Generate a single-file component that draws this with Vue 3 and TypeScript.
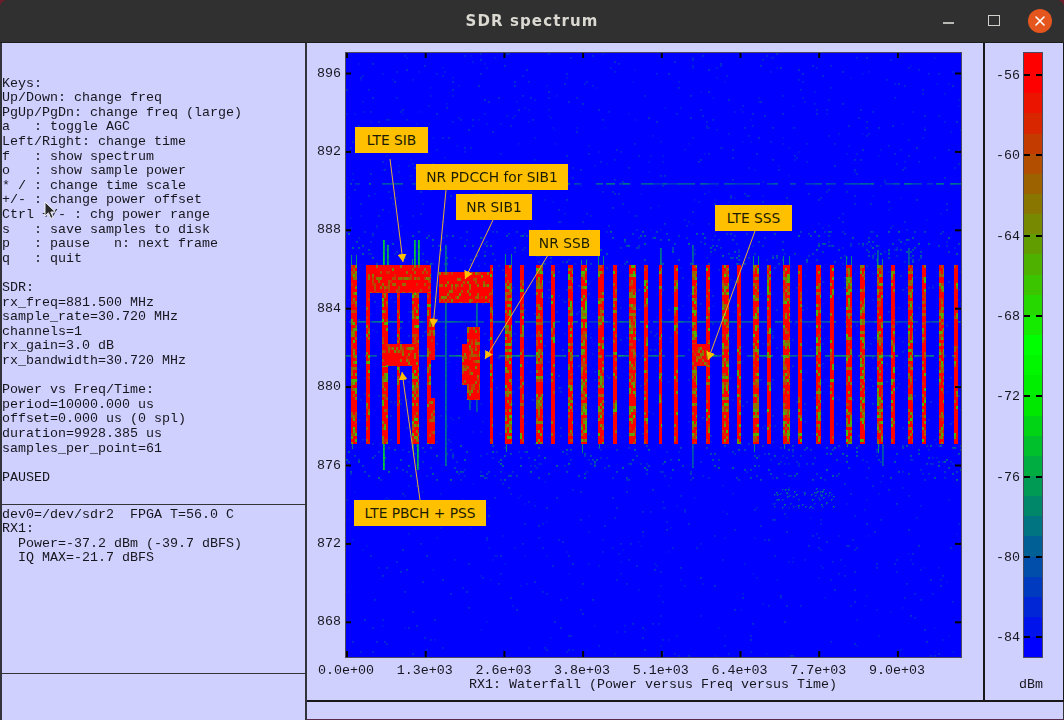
<script setup lang="ts">
import { onMounted, ref } from 'vue'

const W = 615
const H = 604
const X0 = 346
const Y0 = 53

const keysText = `

Keys:
Up/Down: change freq
PgUp/PgDn: change freq (large)
a   : toggle AGC
Left/Right: change time
f   : show spectrum
o   : show sample power
* / : change time scale
+/- : change power offset
Ctrl +/- : chg power range
s   : save samples to disk
p   : pause   n: next frame
q   : quit

SDR:
rx_freq=881.500 MHz
sample_rate=30.720 MHz
channels=1
rx_gain=3.0 dB
rx_bandwidth=30.720 MHz

Power vs Freq/Time:
period=10000.000 us
offset=0.000 us (0 spl)
duration=9928.385 us
samples_per_point=61

PAUSED`

const statusText = `dev0=/dev/sdr2  FPGA T=56.0 C
RX1:
  Power=-37.2 dBm (-39.7 dBFS)
  IQ MAX=-21.7 dBFS`

const freqTicks = [896, 892, 888, 884, 880, 876, 872, 868].map((f, i) => ({
  label: String(f),
  y: 20.5 + i * 78.4,
}))

const timeTicks = ['0.0e+00', '1.3e+03', '2.6e+03', '3.8e+03', '5.1e+03', '6.4e+03', '7.7e+03', '9.0e+03'].map(
  (label, i) => ({ label, x: i * 78.7 }),
)

const powerTicks = [-56, -60, -64, -68, -72, -76, -80, -84].map((p, i) => ({
  label: '-' + Math.abs(p),
  y: 22 + i * 80.3,
}))

const scaleSteps = Array.from({ length: 30 }, (_, i) => {
  if (i <= 1) return 'rgb(255,0,0)'
  if (i <= 14) {
    const t = (i - 1) / 13
    return `rgb(${Math.round(255 * (1 - t))},${Math.round(255 * t)},0)`
  }
  if (i <= 17) return `rgb(0,${255 - (i - 14) * 8},0)`
  const t = (i - 17) / 12
  return `rgb(0,${Math.round(231 * (1 - t))},${Math.round(255 * t)})`
})

const notes = [
  { text: 'LTE SIB', x: 9, y: 74, w: 73, from: [44, 106], to: [57, 209] },
  { text: 'NR PDCCH for SIB1', x: 70, y: 111, w: 152, from: [100, 137], to: [87, 274] },
  { text: 'NR SIB1', x: 110, y: 141, w: 76, from: [147, 167], to: [119, 226] },
  { text: 'NR SSB', x: 183, y: 177, w: 71, from: [202, 202], to: [139, 306] },
  { text: 'LTE SSS', x: 369, y: 152, w: 77, from: [409, 178], to: [362, 307] },
  { text: 'LTE PBCH + PSS', x: 8, y: 447, w: 132, from: [74, 447], to: [56, 319] },
]

const narrowBars: [number, number][] = [
  [351, 357], [366, 370], [382, 388], [397, 400], [412, 419], [427, 431], [490, 493], [505, 512],
  [520, 524], [536, 543], [551, 555], [568, 573], [581, 587], [598, 604], [613, 617], [629, 636],
  [644, 648], [659, 662], [674, 678], [692, 697], [706, 710], [722, 729], [737, 741], [753, 759],
  [767, 771], [783, 790], [798, 802], [816, 821], [830, 834], [846, 852], [860, 865], [877, 883],
  [891, 895], [908, 913], [922, 926], [939, 944], [954, 958],
]

const blocks: [number, number, number, number][] = [
  [366, 265, 431, 293],
  [382, 344, 419, 366],
  [427, 318, 435, 360],
  [427, 398, 435, 444],
  [439, 272, 490, 303],
  [467, 327, 480, 400],
  [462, 344, 467, 385],
  [692, 344, 710, 366],
]

const spikes: [number, number, number, number][] = [
  [383, 240, 265, 0.4], [387, 245, 265, 0.34], [414, 240, 265, 0.38], [418, 240, 265, 0.4],
  [383, 444, 470, 0.4], [417, 444, 470, 0.36], [445, 245, 466, 0.22], [476, 303, 327, 0.22],
  [469, 400, 410, 0.18], [476, 400, 412, 0.18], [660, 248, 265, 0.24], [692, 245, 265, 0.2],
  [692, 444, 468, 0.18], [882, 444, 466, 0.18], [877, 250, 265, 0.18], [908, 248, 265, 0.18],
]

const plot = ref<HTMLCanvasElement | null>(null)

const paint = (ctx: CanvasRenderingContext2D) => {
  let seed = 20240611
  const rand = () => {
    seed = (seed + 0x6d2b79f5) | 0
    let t = Math.imul(seed ^ (seed >>> 15), 1 | seed)
    t = (t + Math.imul(t ^ (t >>> 7), 61 | t)) ^ t
    return ((t ^ (t >>> 14)) >>> 0) / 4294967296
  }

  const power = new Float32Array(W * H)
  const raise = (x: number, y: number, v: number) => {
    if (x < 0 || y < 0 || x >= W || y >= H) return
    const i = y * W + x
    if (v > power[i]) power[i] = v
  }

  // noise floor, a bit denser around the carrier
  for (let y = 0; y < H; y += 2) {
    const py = y + Y0
    const busy = (py > 230 && py < 265) || (py > 444 && py < 480)
    const chance = busy ? 0.06 : py > 480 ? 0.014 : 0.02
    for (let x = 0; x < W; x += 2) {
      if (rand() < chance) {
        const v = busy ? 0.06 + rand() * 0.14 : 0.03 + rand() * 0.07
        raise(x, y, v)
        raise(x + 1, y, v)
        raise(x, y + 1, v * 0.8)
        raise(x + 1, y + 1, v * 0.8)
      }
    }
  }

  for (let i = 0; i < 60; i++) {
    const x = 770 - X0 + Math.floor(rand() * 66)
    const y = 488 - Y0 + Math.floor(rand() * 20)
    const v = 0.1 + rand() * 0.12
    raise(x, y, v)
    raise(x + 1, y, v)
    raise(x, y + 1, v)
  }

  // steady carriers, broken into short dim runs
  const carrier = (py: number, strength: number, gaps: number) => {
    let x = 0
    while (x < W) {
      const run = 2 + Math.floor(rand() * 9)
      if (rand() > gaps) {
        const v = strength * (0.5 + rand() * 0.6)
        for (let k = 0; k < run; k++) {
          raise(x + k, py - Y0, v)
          raise(x + k, py - Y0 + 1, v * 0.7)
        }
      }
      x += run
    }
  }
  carrier(183, 0.2, 0.3)
  carrier(321, 0.22, 0.2)
  carrier(355, 0.26, 0.4)

  for (const [x, a, b, v] of spikes) {
    for (let y = a; y < b; y++) {
      const s = v * (0.8 + rand() * 0.3)
      raise(x - X0, y - Y0, s)
      raise(x + 1 - X0, y - Y0, s * 0.8)
    }
  }

  const fill = (x0: number, y0: number, x1: number, y1: number, speckle: number, low: number) => {
    for (let y = y0; y < y1; y += 3) {
      const streak = rand() < 0.3 ? 2 : 0.7
      for (let x = x0; x < x1; x += 2) {
        let v = 1
        if (rand() < speckle * streak) v = low + rand() * (0.92 - low)
        for (let dy = 0; dy < 3 && y + dy < y1; dy++) {
          for (let dx = 0; dx < 2 && x + dx < x1; dx++) {
            power[(y + dy - Y0) * W + x + dx - X0] = v
          }
        }
      }
    }
  }

  for (const [a, b] of narrowBars) {
    const width = b - a
    fill(a, 265, b, 444, width >= 5 ? 0.42 : 0.2, 0.62)
    if (width >= 6 && rand() < 0.6) {
      const up = 5 + Math.floor(rand() * 7)
      for (let y = 265 - up; y < 265; y++) {
        raise(a - X0, y - Y0, 0.26)
        raise(b - 1 - X0, y - Y0, 0.26)
      }
      const down = 3 + Math.floor(rand() * 8)
      for (let y = 444; y < 444 + down; y++) raise(a + 1 - X0, y - Y0, 0.26)
    }
  }
  for (const [x0, y0, x1, y1] of blocks) fill(x0, y0, x1, y1, 0.25, 0.72)

  const image = ctx.createImageData(W, H)
  for (let i = 0; i < W * H; i++) {
    const v = power[i]
    const t = v < 0.5 ? v / 0.5 : (v - 0.5) / 0.5
    const o = i * 4
    image.data[o] = v < 0.5 ? 0 : 255 * t
    image.data[o + 1] = v < 0.5 ? 255 * t : 255 * (1 - t)
    image.data[o + 2] = v < 0.5 ? 255 * (1 - t) : 0
    image.data[o + 3] = 255
  }
  ctx.putImageData(image, 0, 0)
}

onMounted(() => {
  const ctx = plot.value?.getContext('2d')
  if (ctx) paint(ctx)
})
</script>

<template>
  <div class="window">
    <header class="titlebar">
      <h1>SDR spectrum</h1>
      <div class="controls">
        <span class="minimize"></span>
        <span class="maximize"></span>
        <span class="close">
          <svg width="24" height="24" viewBox="0 0 24 24">
            <path d="M8 8l8 8M16 8l-8 8" stroke="#fff" stroke-width="1.6" stroke-linecap="round" />
          </svg>
        </span>
      </div>
    </header>

    <div class="body">
      <aside class="side">
        <pre class="pane keys">{{ keysText }}</pre>
        <pre class="pane status">{{ statusText }}</pre>
        <div class="pane spare"></div>
        <svg class="cursor" width="14" height="19" viewBox="0 0 14 19">
          <path d="M1 1v14l3.4-3.2 2.4 5.6 2.4-1-2.4-5.4h4.6z" fill="#2a2a2a" stroke="#f4f4f4" stroke-width="1" />
        </svg>
      </aside>

      <div class="main">
        <div class="charts">
          <section class="plot-panel">
            <div class="frame">
              <canvas ref="plot" class="waterfall" :width="W" :height="H"></canvas>
              <svg class="overlay" :width="W" :height="H">
                <defs>
                  <marker id="head" markerUnits="userSpaceOnUse" markerWidth="9" markerHeight="9" refX="8" refY="4.5" orient="auto">
                    <path d="M0 0L8 4.5L0 9z" fill="#ffc000" />
                  </marker>
                </defs>
                <g stroke="#000" stroke-width="2">
                  <g v-for="t in freqTicks" :key="t.label">
                    <line x1="0" :y1="t.y" x2="5" :y2="t.y" />
                    <line :x1="W - 6" :y1="t.y" :x2="W" :y2="t.y" />
                  </g>
                  <g v-for="t in timeTicks" :key="t.label">
                    <line :x1="t.x + 1" y1="0" :x2="t.x + 1" y2="5" />
                    <line :x1="t.x + 1" :y1="H - 6" :x2="t.x + 1" :y2="H" />
                  </g>
                </g>
                <line
                  v-for="n in notes"
                  :key="n.text"
                  :x1="n.from[0]"
                  :y1="n.from[1]"
                  :x2="n.to[0]"
                  :y2="n.to[1]"
                  stroke="#e8b030"
                  stroke-width="1"
                  marker-end="url(#head)"
                />
              </svg>
              <div
                v-for="n in notes"
                :key="n.text"
                class="note"
                :style="{ left: n.x + 'px', top: n.y + 'px', width: n.w + 'px' }"
              >
                {{ n.text }}
              </div>
              <span v-for="t in freqTicks" :key="t.label" class="tick y-tick" :style="{ top: t.y + 'px' }">{{ t.label }}</span>
              <span v-for="t in timeTicks" :key="t.label" class="tick x-tick" :style="{ left: t.x + 'px' }">{{ t.label }}</span>
            </div>
            <p class="caption">RX1: Waterfall (Power versus Freq versus Time)</p>
          </section>

          <section class="scale-panel">
            <div class="scale">
              <i v-for="(c, i) in scaleSteps" :key="i" :style="{ background: c }"></i>
              <template v-for="t in powerTicks" :key="t.label">
                <b class="dash" :style="{ top: t.y + 'px' }"></b>
                <span class="tick power-tick" :style="{ top: t.y + 'px' }">{{ t.label }}</span>
              </template>
            </div>
            <p class="unit">dBm</p>
          </section>
        </div>
        <div class="strip"></div>
      </div>
    </div>
  </div>
</template>

<style scoped>
.window {
  width: 1064px;
  height: 720px;
  display: flex;
  flex-direction: column;
  background: #303030;
  border-radius: 8px 8px 0 0;
  overflow: hidden;
  font-family: "Liberation Mono", monospace;
  font-size: 13.33px;
  line-height: 14.6px;
  color: #16161e;
}

.titlebar {
  flex: none;
  height: 43px;
  position: relative;
  display: flex;
  align-items: center;
  justify-content: center;
  background: #303030;
  border-bottom: 1px solid #1e1e1e;
  box-sizing: border-box;
}

h1 {
  margin: 1px 0 0;
  font-family: "DejaVu Sans", sans-serif;
  font-size: 15px;
  font-weight: 700;
  letter-spacing: 1.1px;
  color: #dcd9d2;
  filter: blur(0.25px);
}

.controls {
  position: absolute;
  right: 12px;
  top: 9px;
  display: flex;
  align-items: center;
}

.minimize {
  width: 11px;
  height: 2px;
  margin-top: 3px;
  background: #b8b8b4;
}

.maximize {
  width: 10px;
  height: 9px;
  margin-left: 34px;
  margin-top: -2px;
  border: 1.5px solid #d0d0cc;
}

.close {
  width: 24px;
  height: 24px;
  margin-left: 28px;
  border-radius: 50%;
  background: #e5561f;
}

.body {
  flex: 1;
  min-height: 0;
  display: flex;
}

.side {
  position: relative;
  flex: none;
  width: 307px;
  display: flex;
  flex-direction: column;
  border-left: 2px solid #33333a;
  border-right: 2px solid #33333a;
  box-sizing: border-box;
  background: #d0d0ff;
}

.pane {
  margin: 0;
  font: inherit;
  filter: blur(0.3px);
}

.keys {
  height: 462px;
  padding-top: 4.5px;
  box-sizing: border-box;
  border-bottom: 1px solid #33333a;
}

.status {
  height: 169px;
  padding-top: 2.5px;
  box-sizing: border-box;
  border-bottom: 1px solid #33333a;
}

.spare {
  flex: 1;
}

.cursor {
  position: absolute;
  left: 42px;
  top: 158px;
}

.main {
  flex: 1;
  min-width: 0;
  display: flex;
  flex-direction: column;
}

.charts {
  height: 659px;
  display: flex;
  background: #18181c;
  padding-bottom: 2px;
  box-sizing: border-box;
  gap: 2px;
}

.plot-panel {
  width: 676px;
  flex: none;
  box-sizing: border-box;
  padding: 10px 0 0 39px;
  background: #d0d0ff;
}

.frame {
  position: relative;
  width: 615px;
  height: 604px;
  outline: 1px solid #4a4a5c;
}

.waterfall {
  display: block;
  filter: blur(0.7px);
}

.overlay {
  position: absolute;
  left: 0;
  top: 0;
}

.note {
  position: absolute;
  height: 26px;
  line-height: 26px;
  text-align: center;
  background: #ffc000;
  color: #1c1c00;
  font-family: "DejaVu Sans", sans-serif;
  font-size: 13.8px;
  white-space: nowrap;
}

.tick {
  position: absolute;
  white-space: nowrap;
  filter: blur(0.3px);
}

.y-tick {
  right: 620px;
  transform: translateY(-7px);
}

.x-tick {
  top: 611px;
  transform: translateX(-50%);
}

.caption {
  margin: 21px 0 0 123px;
  white-space: nowrap;
  filter: blur(0.3px);
}

.scale-panel {
  flex: 1;
  background: #d0d0ff;
  padding: 10px 0 0 39px;
  margin-right: 1px;
}

.scale {
  position: relative;
  width: 18px;
  height: 604px;
  outline: 1px solid #4a4a5c;
  display: flex;
  flex-direction: column;
}

.scale i {
  flex: 1;
  display: block;
}

.dash {
  position: absolute;
  left: 0;
  width: 18px;
  height: 2px;
  margin-top: -1px;
  background: linear-gradient(90deg, #000 6px, transparent 6px, transparent 12px, #000 12px);
}

.power-tick {
  right: 22px;
  transform: translateY(-6px);
}

.unit {
  margin: 21px 0 0 -5px;
  filter: blur(0.3px);
}

.strip {
  flex: 1;
  background: #d0d0ff;
  border-bottom: 1px solid #5a2a4a;
  border-right: 1px solid #33333a;
}
</style>

<style>
html,
body {
  margin: 0;
  background: #6b1d2c;
}
</style>
